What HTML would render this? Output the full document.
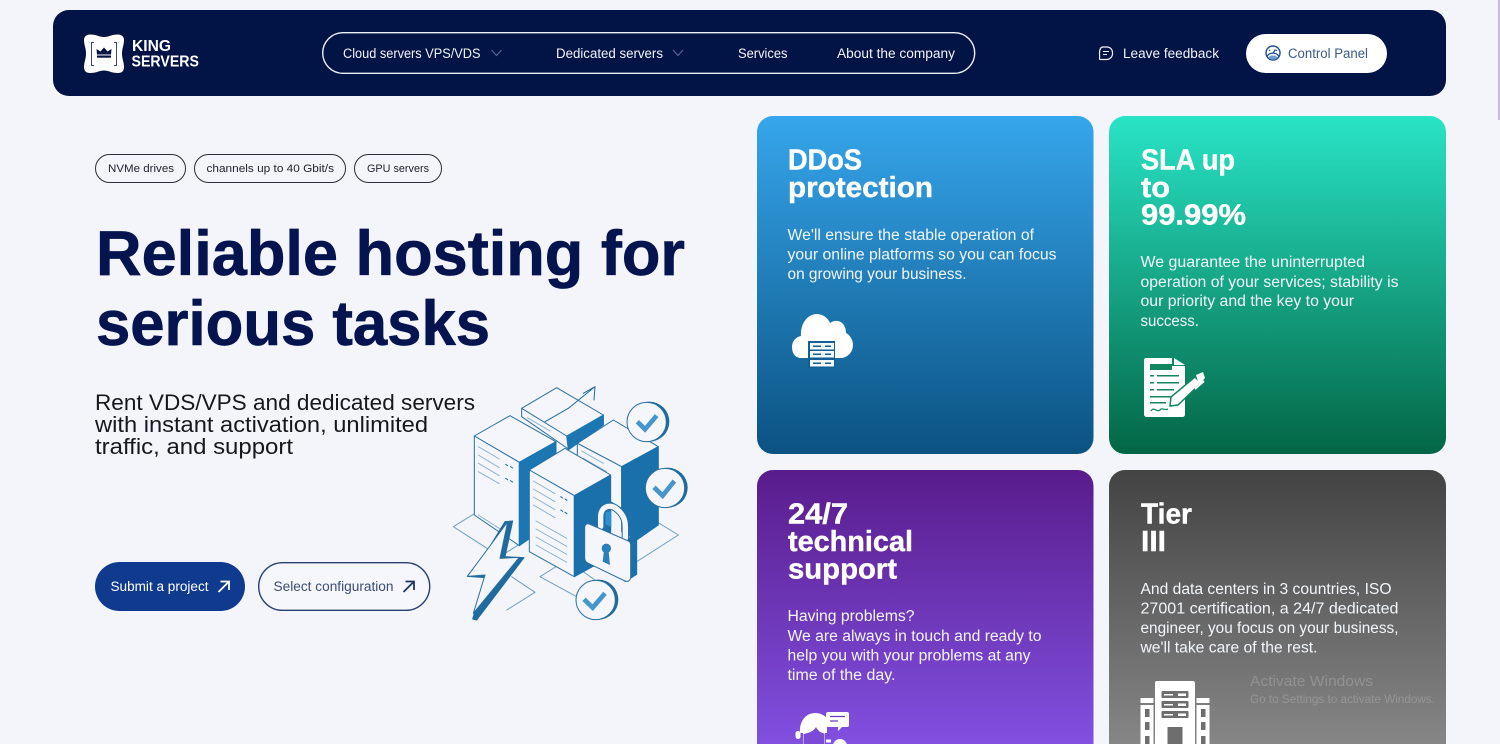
<!DOCTYPE html>
<html lang="en"><head><meta charset="utf-8"><title>King Servers</title>
<style>
html,body{margin:0;padding:0;background:#f3f5fa;overflow:hidden}
svg{display:block}
text{font-family:"Liberation Sans",sans-serif}
</style></head><body>
<svg xmlns="http://www.w3.org/2000/svg" width="1500" height="744" viewBox="0 0 1500 744">
<defs>
<linearGradient id="g1" x1="0" y1="0" x2="0" y2="1"><stop offset="0" stop-color="#36a6ec"/><stop offset="1" stop-color="#0b5282"/></linearGradient>
<linearGradient id="g2" x1="0" y1="0" x2="0" y2="1"><stop offset="0" stop-color="#29e4c6"/><stop offset="1" stop-color="#036645"/></linearGradient>
<linearGradient id="g3" x1="0" y1="0" x2="0" y2="1"><stop offset="0" stop-color="#591c8c"/><stop offset="1" stop-color="#8150e0"/></linearGradient>
<linearGradient id="g4" x1="0" y1="0" x2="0" y2="1"><stop offset="0" stop-color="#434343"/><stop offset="1" stop-color="#868686"/></linearGradient>
</defs>
<rect width="1500" height="744" fill="#f3f5fa"/>
<rect x="1498" y="0" width="2" height="120" fill="#c9b8ea"/>

<!-- header -->
<rect x="53" y="10" width="1393" height="86" rx="16" fill="#021345"/>
<path d="M90 34.500C97 34.500 99 37 104 37C109 37 111 34.500 118 34.500C122 34.500 124 37 124 40C124 45 122 48 122 53.500C122 59 124 62 124 67C124 71 122 73 118 73C111 73 109 70.500 104 70.500C99 70.500 97 73 90 73C86 73 84 71 84 67C84 62 86 59 86 53.500C86 48 84 45 84 40C84 37 86 34.500 90 34.500Z" fill="#fff"/>
<path d="M94 42.500H91.500V65.500H94M114 42.500H116.500V65.500H114" fill="none" stroke="#3a466c" stroke-width="1"/>
<path d="M97 54.500L96.500 49L100.500 51.500L104 47.500L107.500 51.500L111.500 49L111 54.500Z" fill="#021345"/>
<rect x="97" y="55.500" width="14" height="2.200" fill="#021345"/>
<text x="132" y="51" font-size="15.500" font-weight="700" fill="#fff" textLength="39" lengthAdjust="spacingAndGlyphs">KING</text>
<text x="131.500" y="66.500" font-size="15.500" font-weight="700" fill="#fff" textLength="67.500" lengthAdjust="spacingAndGlyphs">SERVERS</text>

<rect x="322.700" y="32.700" width="652" height="40.600" rx="20.300" fill="none" stroke="#eef1f8" stroke-width="1.400"/>
<g font-size="13.500" fill="#f2f4fa">
<text x="343" y="58" textLength="137.500" lengthAdjust="spacingAndGlyphs">Cloud servers VPS/VDS</text>
<text x="556" y="58" textLength="107" lengthAdjust="spacingAndGlyphs">Dedicated servers</text>
<text x="738" y="58" textLength="49.500" lengthAdjust="spacingAndGlyphs">Services</text>
<text x="837" y="58" textLength="118" lengthAdjust="spacingAndGlyphs">About the company</text>
<text x="1123" y="58" textLength="96" lengthAdjust="spacingAndGlyphs">Leave feedback</text>
</g>
<path d="M491.500 50L496.500 55.500L501.500 50M673 50L678 55.500L683 50" fill="none" stroke="#56668f" stroke-width="1.200"/>
<path d="M1103 47H1107A5.500 5.500 0 0 1 1112.500 52.500V53A6 6 0 0 1 1106.500 59.500H1100.500C1099.600 59.500 1099.300 59 1099.500 58.200C1100 56.800 1099.500 55.500 1099.500 53.500C1099.500 50 1100.500 47 1103 47Z" fill="none" stroke="#eef1f8" stroke-width="1.200"/>
<path d="M1103 51.500H1109M1103 54.500H1107" stroke="#eef1f8" stroke-width="1.100"/>
<rect x="1246" y="34" width="141" height="39" rx="19.500" fill="#fff"/>
<circle cx="1273" cy="53" r="7" fill="none" stroke="#1e4f95" stroke-width="1.400"/>
<path d="M1267 56.500C1269.500 52 1276.500 52 1279 56.500M1273 53L1275.500 49.500M1269 50L1270 50.800M1277 50L1276 50.800" fill="none" stroke="#1e4f95" stroke-width="1.300"/>
<path d="M1268 57.500A7 7 0 0 0 1278 57.500L1275 55.500H1271Z" fill="#6e9bd0"/>
<text x="1288" y="58" font-size="13.500" fill="#3a5a8e" textLength="80" lengthAdjust="spacingAndGlyphs">Control Panel</text>

<!-- tags -->
<g fill="none" stroke="#2b2f3a" stroke-width="1">
<rect x="95.500" y="154.500" width="90" height="28" rx="14"/>
<rect x="194.500" y="154.500" width="151" height="28" rx="14"/>
<rect x="354.500" y="154.500" width="87" height="28" rx="14"/>
</g>
<g font-size="11" fill="#20242e">
<text x="108" y="172" textLength="66" lengthAdjust="spacingAndGlyphs">NVMe drives</text>
<text x="206.500" y="172" textLength="127.500" lengthAdjust="spacingAndGlyphs">channels up to 40 Gbit/s</text>
<text x="367" y="172" textLength="62" lengthAdjust="spacingAndGlyphs">GPU servers</text>
</g>

<!-- heading -->
<g font-size="63" font-weight="700" fill="#05144f" stroke="#05144f" stroke-width=".7">
<text x="96" y="275" textLength="589" lengthAdjust="spacingAndGlyphs">Reliable hosting for</text>
<text x="96" y="345" textLength="394" lengthAdjust="spacingAndGlyphs">serious tasks</text>
</g>
<g font-size="22.500" fill="#16181f">
<text x="95" y="410" textLength="380" lengthAdjust="spacingAndGlyphs">Rent VDS/VPS and dedicated servers</text>
<text x="95" y="432" textLength="333" lengthAdjust="spacingAndGlyphs">with instant activation, unlimited</text>
<text x="95" y="454" textLength="198" lengthAdjust="spacingAndGlyphs">traffic, and support</text>
</g>

<!-- buttons -->
<rect x="95" y="562" width="150" height="49" rx="24.500" fill="#0f3a8e"/>
<text x="110.500" y="591" font-size="13.500" fill="#fff" textLength="98" lengthAdjust="spacingAndGlyphs">Submit a project</text>
<path d="M218.500 592L228.500 582M220.500 581.500H229V590" fill="none" stroke="#fff" stroke-width="1.800"/>
<rect x="258.700" y="562.700" width="171" height="47.600" rx="23.800" fill="#f5f7fc" stroke="#26406f" stroke-width="1.400"/>
<text x="273.500" y="591" font-size="13.500" fill="#3a4d76" textLength="120" lengthAdjust="spacingAndGlyphs">Select configuration</text>
<path d="M403.500 592L413.500 582M405.500 581.500H414V590" fill="none" stroke="#1f3766" stroke-width="1.800"/>

<!-- illustration (drawn in 3x coordinates) -->
<g transform="translate(440 375) scale(.33333)" stroke="#2a6f9f" stroke-width="3" stroke-linejoin="round" stroke-linecap="round">
<path d="M40 455L105 415L250 500L180 545Z" fill="none" stroke="#6fa0bf"/>
<path d="M590 560L715 480L650 440M300 605L380 555L500 640L410 665Z M215 605L285 652L200 705" fill="none" stroke="#6fa0bf"/>
<!-- back server -->
<path d="M245 100L350 38L490 120V150L385 222L245 125Z" fill="#f4f6fb"/>
<path d="M380 183L490 120V150L385 225Z" fill="#1b76b2" stroke="#1b76b2"/>
<path d="M245 100L380 183" fill="none"/>
<path d="M262 128L330 168" fill="none" stroke="#8db4ce"/>
<path d="M315 140L385 100L465 35M430 55L465 35L462 75" fill="none" stroke="#1f6a9e"/>
<!-- right server -->
<path d="M412 205L520 135L655 215L545 275Z" fill="#f4f6fb"/>
<path d="M412 205L545 275V400L412 320Z" fill="#f4f6fb"/>
<path d="M545 275L655 215V450L590 495L545 470Z" fill="#1a70ab" stroke="#1a70ab"/>
<path d="M425 228L490 265M430 250L500 290" stroke="#8db4ce" fill="none"/>
<!-- left server -->
<path d="M103 183L210 122L348 200L238 262Z" fill="#f4f6fb"/>
<path d="M103 183L238 262V512L103 420Z" fill="#f4f6fb"/>
<path d="M238 262L348 200V270L270 320V490L238 512Z" fill="#1b76b2" stroke="#1b76b2"/>
<path d="M115 215L178 252M115 240L178 278M115 265L178 302M115 290L178 326M115 420L205 478" fill="none" stroke="#8db4ce"/>
<path d="M197 268L203 272M212 275L218 279M197 310L203 314M212 317L218 321" stroke="#1f6a9e" fill="none"/>
<!-- front server -->
<path d="M268 285L375 220L512 300L403 362Z" fill="#f4f6fb"/>
<path d="M268 285L403 362V605L268 530Z" fill="#f4f6fb"/>
<path d="M403 362L512 300V545L403 605Z" fill="#1a70ab" stroke="#1a70ab"/>
<path d="M280 318L345 356M280 342L345 380M280 366L345 404M280 390L345 428M288 438L380 490M288 462L380 514M288 486L380 538M288 510L380 562" fill="none" stroke="#8db4ce"/>
<path d="M362 365L368 369M375 372L381 376M362 405L368 409M375 412L381 416" stroke="#1f6a9e" fill="none"/>
<!-- lock -->
<path d="M482 455V425C482 395 510 385 530 402C548 417 556 432 556 455V495" fill="none" stroke="#2a6f9f" stroke-width="22"/>
<path d="M482 455V425C482 395 510 385 530 402C548 417 556 432 556 455V495" fill="none" stroke="#f4f6fb" stroke-width="16"/>
<path d="M496 412V448L514 456V408Z" fill="#2e8fd0" stroke="none"/>
<path d="M555 620L590 598V490L575 480L560 500Z" fill="#1a70ab" stroke="#1a70ab"/>
<path d="M448 447L565 498C570 500 572 505 572 510V605C572 615 565 622 555 618L445 565C438 562 434 556 434 548V458C434 449 440 444 448 447Z" fill="#f4f6fb"/>
<circle cx="499" cy="520" r="14" fill="#2a7fb8" stroke="none"/>
<path d="M492 525L488 560L510 570L506 530Z" fill="#2a7fb8" stroke="none"/>
<!-- lightning -->
<path d="M98 732L135 608L82 604L140 530L195 440L218 438L195 545L252 548L110 735Z" fill="#1f6a9e" stroke="#1f6a9e"/>
<path d="M100 715L135 600L82 604L152 510L203 440L180 550L238 547Z" fill="#f4f6fb"/>
<!-- checks -->
<g>
<circle cx="628" cy="140" r="60" fill="#1f6a9e" stroke="none"/><circle cx="620" cy="141" r="59" fill="#f4f6fb"/>
<path d="M592 140L615 163L650 122" fill="none" stroke="#4596cd" stroke-width="14" stroke-linecap="butt" stroke-linejoin="miter"/>
<circle cx="683" cy="338" r="60" fill="#1f6a9e" stroke="none"/><circle cx="675" cy="339" r="59" fill="#f4f6fb"/>
<path d="M642 337L668 362L703 318" fill="none" stroke="#4596cd" stroke-width="14" stroke-linecap="butt" stroke-linejoin="miter"/>
<circle cx="475" cy="674" r="60" fill="#1f6a9e" stroke="none"/><circle cx="467" cy="675" r="59" fill="#f4f6fb"/>
<path d="M432 673L458 698L495 655" fill="none" stroke="#4596cd" stroke-width="14" stroke-linecap="butt" stroke-linejoin="miter"/>
</g>
</g>

<!-- cards -->
<rect x="757" y="116" width="336.500" height="338" rx="16" fill="url(#g1)"/>
<rect x="1109" y="116" width="337" height="338" rx="16" fill="url(#g2)"/>
<path d="M773 470H1077.500A16 16 0 0 1 1093.500 486V744H757V486A16 16 0 0 1 773 470Z" fill="url(#g3)"/>
<path d="M1125 470H1430A16 16 0 0 1 1446 486V744H1109V486A16 16 0 0 1 1125 470Z" fill="url(#g4)"/>

<g font-size="28.500" font-weight="700" fill="#fff" stroke="#fff" stroke-width=".4">
<text x="788" y="169.500" textLength="74" lengthAdjust="spacingAndGlyphs">DDoS</text>
<text x="788" y="197" textLength="145" lengthAdjust="spacingAndGlyphs">protection</text>
<text x="1141" y="169.500" textLength="94" lengthAdjust="spacingAndGlyphs">SLA up</text>
<text x="1141" y="197" textLength="29" lengthAdjust="spacingAndGlyphs">to</text>
<text x="1141" y="224.500" textLength="105" lengthAdjust="spacingAndGlyphs">99.99%</text>
<text x="788" y="523.500" textLength="60" lengthAdjust="spacingAndGlyphs">24/7</text>
<text x="788" y="551" textLength="125" lengthAdjust="spacingAndGlyphs">technical</text>
<text x="788" y="578.500" textLength="109" lengthAdjust="spacingAndGlyphs">support</text>
<text x="1141" y="523.500" textLength="51" lengthAdjust="spacingAndGlyphs">Tier</text>
<text x="1141" y="551" textLength="25" lengthAdjust="spacingAndGlyphs">III</text>
</g>
<g font-size="15.500" fill="#f2f6fb">
<text x="787.500" y="240" textLength="246.500" lengthAdjust="spacingAndGlyphs">We'll ensure the stable operation of</text>
<text x="787.500" y="259.500" textLength="269" lengthAdjust="spacingAndGlyphs">your online platforms so you can focus</text>
<text x="787.500" y="279" textLength="179" lengthAdjust="spacingAndGlyphs">on growing your business.</text>
<text x="1140.500" y="267" textLength="224.500" lengthAdjust="spacingAndGlyphs">We guarantee the uninterrupted</text>
<text x="1140.500" y="287" textLength="258" lengthAdjust="spacingAndGlyphs">operation of your services; stability is</text>
<text x="1140.500" y="306" textLength="213.500" lengthAdjust="spacingAndGlyphs">our priority and the key to your</text>
<text x="1140.500" y="326" textLength="58.500" lengthAdjust="spacingAndGlyphs">success.</text>
<text x="787.500" y="621" textLength="127" lengthAdjust="spacingAndGlyphs">Having problems?</text>
<text x="787.500" y="641" textLength="254" lengthAdjust="spacingAndGlyphs">We are always in touch and ready to</text>
<text x="787.500" y="660.500" textLength="243" lengthAdjust="spacingAndGlyphs">help you with your problems at any</text>
<text x="787.500" y="680" textLength="108" lengthAdjust="spacingAndGlyphs">time of the day.</text>
<text x="1140.500" y="594" textLength="251" lengthAdjust="spacingAndGlyphs">And data centers in 3 countries, ISO</text>
<text x="1140.500" y="613.500" textLength="258" lengthAdjust="spacingAndGlyphs">27001 certification, a 24/7 dedicated</text>
<text x="1140.500" y="633" textLength="258" lengthAdjust="spacingAndGlyphs">engineer, you focus on your business,</text>
<text x="1140.500" y="652.500" textLength="177" lengthAdjust="spacingAndGlyphs">we'll take care of the rest.</text>
</g>

<!-- cloud icon -->
<path d="M800 358C794 357 792 352 792 347C792 341 796 337 801 336C800 327 805 315 816 314C823 314 828 318 830 323C837 318 846 322 846 333C850 335 853 340 853 345C853 352 848 357 842 358Z" fill="#fff"/>
<rect x="808" y="341" width="27" height="27" fill="#135f93"/>
<g fill="#f2f7fb"><rect x="810" y="343" width="24" height="6.500"/><rect x="810" y="351" width="24" height="6.500"/><rect x="810" y="360" width="24" height="6.500"/></g>
<g fill="#135f93"><rect x="813" y="345.500" width="8" height="1.500"/><rect x="825" y="345.500" width="6" height="1.500"/><rect x="813" y="353.500" width="8" height="1.500"/><rect x="825" y="353.500" width="6" height="1.500"/><rect x="813" y="362.500" width="8" height="1.500"/><rect x="825" y="362.500" width="6" height="1.500"/></g>

<!-- document icon -->
<path d="M1146 358H1172V366H1185V414C1185 416 1184 417 1182 417H1147C1145 417 1144 416 1144 414V360C1144 359 1145 358 1146 358Z" fill="#fff"/>
<path d="M1174 358L1185 365H1174Z" fill="#fff"/>
<g fill="#14865f"><rect x="1150" y="364" width="22" height="6"/><rect x="1150" y="375" width="4" height="1.500"/><rect x="1157" y="375" width="22" height="1.500"/><rect x="1150" y="382" width="4" height="1.500"/><rect x="1157" y="382" width="22" height="1.500"/><rect x="1150" y="389" width="4" height="1.500"/><rect x="1157" y="389" width="17" height="1.500"/><rect x="1150" y="396" width="24" height="1.500"/><rect x="1150" y="402" width="16" height="1.500"/></g>
<path d="M1151 411C1154 406 1157 413 1160 410C1162 407 1164 411 1168 409" fill="none" stroke="#14865f" stroke-width="1.300"/>
<path d="M1170 406L1171 397L1195 377L1201 383L1178 405Z" fill="#fff" stroke="#14865f" stroke-width="1.500"/>
<path d="M1196 375L1203 372L1205 378L1199 385Z" fill="#fff"/>
<path d="M1195 389L1204 381" stroke="#fff" stroke-width="2"/>

<!-- agent icon -->
<path d="M800 733C799 720 807 713 815 713C820 713 824 715 827 718V733H825V744H803V733Z" fill="#fff"/>
<path d="M803.500 744V734C809 733 814 731 816 727C818 731 821 733 824.500 733.500V744Z" fill="#7b4ad6"/>
<rect x="795.500" y="731" width="5" height="8" rx="2.500" fill="#fff"/>
<path d="M826 741H831" stroke="#fff" stroke-width="3"/>
<circle cx="840" cy="746" r="7" fill="#fff"/>
<path d="M828 712H847C848.500 712 849 713 849 714V725C849 726 848.500 727 847 727H842L838 731V727H828C827 727 826 726 826 725V714C826 713 827 712 828 712Z" fill="#fff"/>
<path d="M830 716.500H845M830 721H838" stroke="#6a39c8" stroke-width="1.300"/>

<!-- building icon -->
<path d="M1156 681H1193C1194 681 1195 682 1195 683V744H1155V683C1155 682 1155.500 681 1156 681Z" fill="#fff"/>
<rect x="1140.500" y="698" width="13" height="5" fill="#fff"/><rect x="1140.500" y="705" width="13" height="39" fill="#fff"/>
<rect x="1196.500" y="698" width="13" height="5" fill="#fff"/><rect x="1196.500" y="705" width="13" height="39" fill="#fff"/>
<g fill="#6e6e6e"><rect x="1161.500" y="691" width="27" height="7" rx="1"/><rect x="1161.500" y="701" width="27" height="7" rx="1"/><rect x="1161.500" y="711" width="27" height="7" rx="1"/><rect x="1167.500" y="727" width="15" height="17"/>
<rect x="1145" y="709" width="4.500" height="8"/><rect x="1145" y="722" width="4.500" height="8"/><rect x="1145" y="736" width="4.500" height="8"/><rect x="1201" y="709" width="4.500" height="8"/><rect x="1201" y="722" width="4.500" height="8"/><rect x="1201" y="736" width="4.500" height="8"/></g>
<g fill="#fff"><rect x="1164" y="694" width="9" height="1.500"/><rect x="1178" y="693.500" width="8" height="2.500"/><rect x="1164" y="704" width="9" height="1.500"/><rect x="1178" y="703.500" width="8" height="2.500"/><rect x="1164" y="714" width="9" height="1.500"/><rect x="1178" y="713.500" width="8" height="2.500"/></g>

<!-- OS watermark -->
<text x="1250" y="686" font-size="15" fill="#fff" fill-opacity=".2" textLength="123" lengthAdjust="spacingAndGlyphs">Activate Windows</text>
<text x="1250" y="703" font-size="11.500" fill="#fff" fill-opacity=".2" textLength="185" lengthAdjust="spacingAndGlyphs">Go to Settings to activate Windows.</text>
</svg>
</body></html>
